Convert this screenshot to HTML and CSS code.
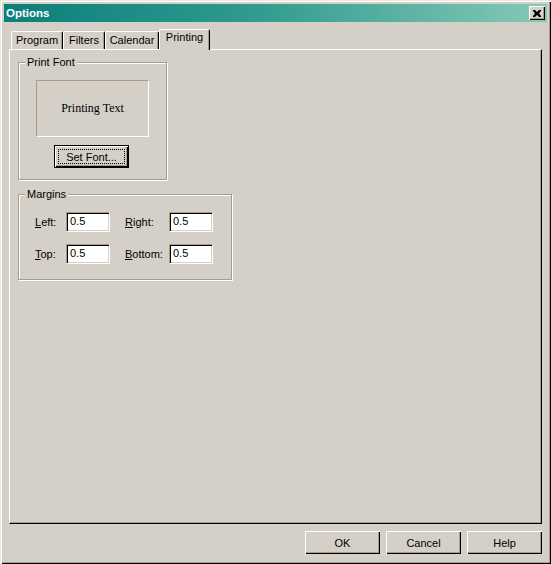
FILE: index.html
```html
<!DOCTYPE html>
<html>
<head>
<meta charset="utf-8">
<title>Options</title>
<link rel="stylesheet" href="styles.css">
</head>
<body>
<div class="window">
  <div class="titlebar">
    <span class="title">Options</span>
    <div class="close">
      <svg width="8" height="7" viewBox="0 0 8 7"><path d="M0 0h2l2 2 2-2h2v1l-2 2.5 2 2.5v1h-2l-2-2-2 2h-2v-1l2-2.5-2-2.5z" fill="#000"/></svg>
    </div>
  </div>
  <div class="client">
    <div class="tabs">
      <div class="tab tab-program">Program</div>
      <div class="tab tab-filters">Filters</div>
      <div class="tab tab-calendar">Calendar</div>
      <div class="tab tab-printing selected">Printing</div>
    </div>
    <div class="panel">
      <div class="group font-group">
        <div class="group-title">Print Font</div>
        <div class="preview">Printing Text</div>
        <div class="btn default set-font"><span class="focus">Set Font...</span></div>
      </div>
      <div class="group margins-group">
        <div class="group-title">Margins</div>
        <div class="grid">
          <div class="label"><u>L</u>eft:</div>
          <div class="field">0.5</div>
          <div class="label second"><u>R</u>ight:</div>
          <div class="field">0.5</div>
          <div class="label"><u>T</u>op:</div>
          <div class="field">0.5</div>
          <div class="label second"><u>B</u>ottom:</div>
          <div class="field">0.5</div>
        </div>
      </div>
    </div>
    <div class="buttons">
      <div class="btn">OK</div>
      <div class="btn">Cancel</div>
      <div class="btn">Help</div>
    </div>
  </div>
</div>
</body>
</html>
```
FILE: styles.css
```css
* { box-sizing: border-box; }
html, body { margin: 0; padding: 0; }
body {
  background: #d4d0c8;
  font-family: "Liberation Sans", Arial, sans-serif;
  font-size: 11px;
  color: #000;
}
.window {
  width: 551px;
  height: 564px;
  padding: 4px;
  display: flex;
  flex-direction: column;
  background: #d4d0c8;
  box-shadow: inset 1px 1px #ece8e0, inset 2px 2px #fff, inset -1px -1px #000, inset -2px -2px #a89c88;
}
.titlebar {
  height: 18px;
  flex: none;
  display: flex;
  align-items: center;
  justify-content: space-between;
  padding: 0 2px 0 2px;
  background: linear-gradient(90deg, #0b7f7b 0%, #2f9a8e 45%, #86c9b7 100%);
}
.title {
  color: #fff;
  font-weight: bold;
  font-size: 11.5px;
  line-height: 14px;
}
.close {
  width: 16px;
  height: 14px;
  background: #d4d0c8;
  display: flex;
  align-items: center;
  justify-content: center;
  box-shadow: inset 1px 1px #fff, inset -1px -1px #000, inset -2px -2px #a89c88;
}
.client {
  flex: 1;
  display: flex;
  flex-direction: column;
  padding: 7px 5px 6px 5px;
}
.tabs {
  height: 20px;
  flex: none;
  display: flex;
  align-items: flex-end;
  padding-left: 2px;
}
.tab {
  height: 18px;
  padding-top: 2px;
  text-align: center;
  line-height: 13px;
  border-left: 1px solid #fff;
  border-top: 1px solid #fff;
  border-right: 1px solid #000;
  border-radius: 2px 2px 0 0;
  box-shadow: inset -1px 0 #a89c88;
}
.tab-program { width: 52px; }
.tab-filters { width: 42px; }
.tab-calendar { width: 54px; }
.tab-printing { width: 51px; }
.tab.selected {
  height: 21px;
  margin-bottom: -1px;
  padding-top: 1px;
  position: relative;
  z-index: 1;
  background: #d4d0c8;
}
.panel {
  flex: 1;
  border-left: 1px solid #fff;
  border-top: 1px solid #fff;
  border-right: 1px solid #000;
  border-bottom: 1px solid #000;
  box-shadow: inset -1px -1px #a89c88;
  padding: 12px 0 0 8px;
}
.group {
  position: relative;
  border: 1px solid #a89c88;
  box-shadow: inset 1px 1px #fff, 1px 1px #fff;
}
.group-title {
  position: absolute;
  top: -7px;
  left: 6px;
  padding: 0 2px;
  line-height: 13px;
  background: #d4d0c8;
}
.font-group {
  width: 149px;
  height: 118px;
  padding: 17px 0 0 17px;
}
.preview {
  width: 113px;
  height: 57px;
  display: flex;
  align-items: center;
  justify-content: center;
  font-family: "Liberation Serif", "Times New Roman", serif;
  font-size: 12px;
  border-left: 1px solid #a89c88;
  border-top: 1px solid #a89c88;
  border-right: 1px solid #fff;
  border-bottom: 1px solid #fff;
}
.btn {
  width: 75px;
  height: 23px;
  display: flex;
  align-items: center;
  justify-content: center;
  background: #d4d0c8;
  box-shadow: inset 1px 1px #fff, inset -1px -1px #000, inset -2px -2px #a89c88;
}
.btn.default {
  border: 1px solid #000;
  box-shadow: inset 1px 1px #fff, inset -1px -1px #000, inset -2px -2px #a89c88;
}
.set-font {
  margin: 8px 0 0 18px;
  padding: 3px;
}
.focus {
  flex: 1;
  align-self: stretch;
  display: flex;
  align-items: center;
  justify-content: center;
  outline: 1px dotted #000;
  outline-offset: -1px;
}
.margins-group {
  width: 214px;
  height: 86px;
  margin-top: 14px;
}
.grid {
  display: grid;
  grid-template-columns: 31px 44px 59px 44px;
  grid-auto-rows: 20px;
  row-gap: 12px;
  padding: 17px 0 0 16px;
  align-items: center;
}
.label.second { padding-left: 15px; }
.field {
  height: 20px;
  background: #fff;
  line-height: 16px;
  padding-left: 3px;
  border-left: 1px solid #a89c88;
  border-top: 1px solid #a89c88;
  border-right: 1px solid #fff;
  border-bottom: 1px solid #fff;
  box-shadow: inset 1px 1px #000, inset -1px -1px #d4d0c8;
}
.buttons {
  flex: none;
  display: flex;
  justify-content: flex-end;
  gap: 6px;
  margin-top: 7px;
  padding-right: 0;
}
```
